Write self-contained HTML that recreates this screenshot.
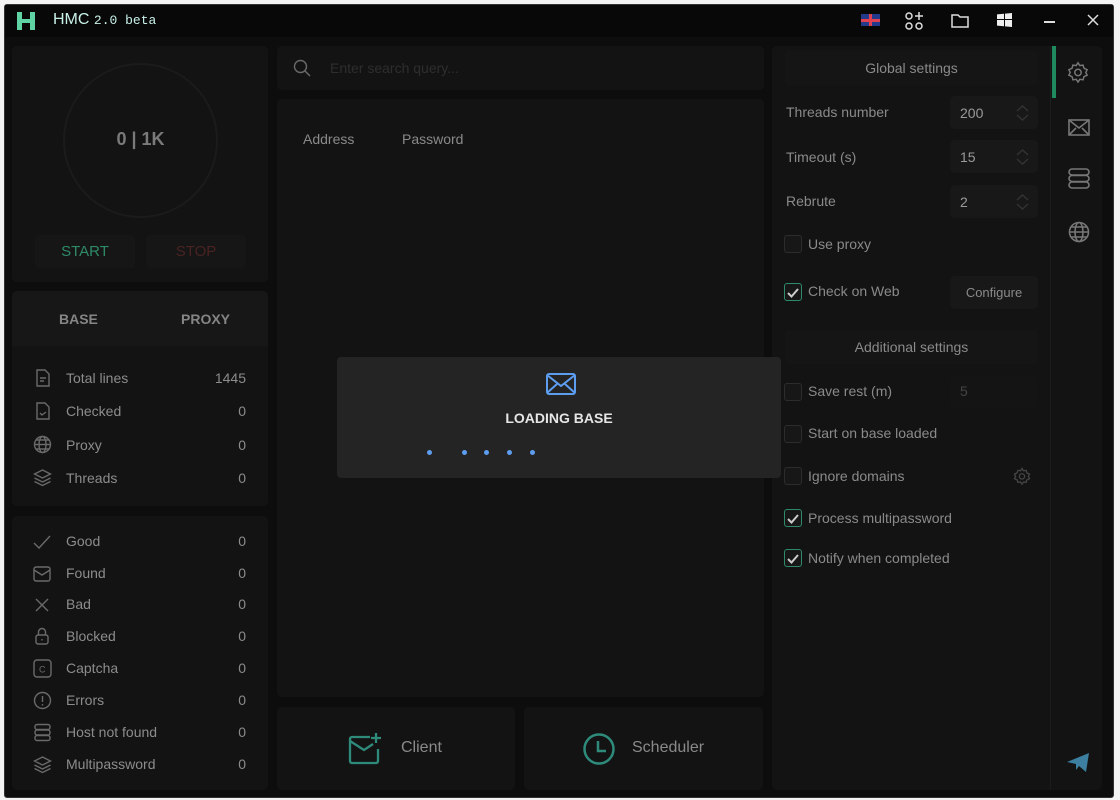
<!DOCTYPE html>
<html><head><meta charset="utf-8"><style>
*{margin:0;padding:0;box-sizing:border-box}
body{width:1120px;height:800px;background:#f3f3f3;position:relative;overflow:hidden;font-family:"Liberation Sans",sans-serif;color:#8a8a8a;font-size:14px}
.a{position:absolute}
.p{position:absolute;background:#131313;border-radius:5px}
svg{position:absolute;fill:none;stroke:#6a6a6a;stroke-width:1.4}
.row{position:absolute;left:66px;font-size:14px;color:#8c8c8c}
.cb{position:absolute;width:18px;height:18px;border:1px solid #2c2c2c;border-radius:3px;background:#171717}
.cb.on{border-color:#2d8a6a}
.inp{position:absolute;background:#181818;border-radius:5px;color:#9a9a9a;font-size:14px;padding-left:10px;line-height:34px}
</style></head><body>
<div class="a" style="left:4px;top:4px;width:1110px;height:794px;background:#0d0d0d;border:1px solid #333;border-radius:3px"></div>
<div class="a" style="left:5px;top:5px;width:1108px;height:32px;background:#080808"></div>
<svg style="left:17px;top:12px" width="18" height="18" viewBox="0 0 18 18"><path fill="#5fd3a3" stroke="none" d="M0 0h5v7h8V0h5v18h-5v-7H5v7H0z"/></svg>
<div class="a" style="left:53px;top:11px;color:#c8f0e8;font-size:16px">HMC <span style="font-family:'Liberation Mono',monospace;font-size:13px">2.0 beta</span></div>
<!-- title icons -->
<div class="a" style="left:861px;top:14px;width:19px;height:12px;background:#243a8a"></div>
<div class="a" style="left:861px;top:19px;width:19px;height:3px;background:#e04050"></div>
<div class="a" style="left:869px;top:14px;width:3px;height:12px;background:#e04050"></div>
<svg style="left:905px;top:12px" width="20" height="18" viewBox="0 0 20 18"><g stroke="#ddd" stroke-width="1.5"><circle cx="4" cy="4" r="3"/><circle cx="4" cy="14" r="3"/><circle cx="14" cy="14" r="3"/><path d="M14 0v8M10 4h8"/></g></svg>
<svg style="left:951px;top:13px" width="18" height="15" viewBox="0 0 18 15"><path stroke="#ddd" stroke-width="1.5" d="M1 2h6l2 2h8v10H1z"/></svg>
<div class="a" style="left:997px;top:13px;width:15px;height:14px;background:#eee;clip-path:polygon(0 10%,100% 0,100% 100%,0 90%)"></div>
<div class="a" style="left:1004px;top:12px;width:1px;height:16px;background:#080808"></div>
<div class="a" style="left:996px;top:19px;width:18px;height:1px;background:#080808"></div>
<div class="a" style="left:1044px;top:21px;width:11px;height:1.5px;background:#ddd"></div>
<svg style="left:1087px;top:14px" width="12" height="12" viewBox="0 0 12 12"><path stroke="#ddd" stroke-width="1.5" d="M1 1l10 10M11 1L1 11"/></svg>

<!-- left top -->
<div class="p" style="left:12px;top:46px;width:256px;height:236px"></div>
<div class="a" style="left:63px;top:63px;width:155px;height:155px;border:2px solid #1b1b1b;border-radius:50%"></div>
<div class="a" style="left:63px;top:129px;width:155px;text-align:center;font-weight:bold;font-size:18px;color:#7a7a7a">0 | 1K</div>
<div class="a" style="left:35px;top:235px;width:100px;height:33px;background:#161616;border-radius:4px;text-align:center;line-height:33px;color:#2e8a66;font-size:15px">START</div>
<div class="a" style="left:146px;top:235px;width:100px;height:33px;background:#161616;border-radius:4px;text-align:center;line-height:33px;color:#4a2222;font-size:15px">STOP</div>

<!-- base panel -->
<div class="p" style="left:12px;top:291px;width:256px;height:215px"></div>
<div class="a" style="left:12px;top:291px;width:256px;height:55px;background:#171717;border-radius:5px 5px 0 0"></div>
<div class="a" style="left:59px;top:311px;font-weight:bold;color:#858585">BASE</div>
<div class="a" style="left:181px;top:311px;font-weight:bold;color:#858585">PROXY</div>
<div class="row" style="top:370px;width:180px">Total lines<span class="a" style="left:130px;width:50px;text-align:right">1445</span></div>
<div class="row" style="top:403px;width:180px">Checked<span class="a" style="left:130px;width:50px;text-align:right">0</span></div>
<div class="row" style="top:437px;width:180px">Proxy<span class="a" style="left:130px;width:50px;text-align:right">0</span></div>
<div class="row" style="top:470px;width:180px">Threads<span class="a" style="left:130px;width:50px;text-align:right">0</span></div>
<svg style="left:35px;top:369px" width="16" height="18" viewBox="0 0 16 18"><path d="M2 1h8l4 4v12H2z M5 9h6M5 12h4"/></svg>
<svg style="left:35px;top:402px" width="16" height="18" viewBox="0 0 16 18"><path d="M2 1h8l4 4v12H2z M5 11l2 2 4-3"/></svg>
<svg style="left:33px;top:435px" width="19" height="19" viewBox="0 0 19 19"><circle cx="9.5" cy="9.5" r="8"/><ellipse cx="9.5" cy="9.5" rx="3.5" ry="8"/><path d="M1.5 9.5h16M3 5h13M3 14h13"/></svg>
<svg style="left:33px;top:468px" width="19" height="19" viewBox="0 0 19 19"><path d="M9.5 2l8 4-8 4-8-4z M1.5 10l8 4 8-4 M1.5 13.5l8 4 8-4"/></svg>

<!-- stats panel -->
<div class="p" style="left:12px;top:516px;width:256px;height:274px"></div>
<div class="row" style="top:533px;width:180px">Good<span class="a" style="left:130px;width:50px;text-align:right">0</span></div>
<div class="row" style="top:565px;width:180px">Found<span class="a" style="left:130px;width:50px;text-align:right">0</span></div>
<div class="row" style="top:596px;width:180px">Bad<span class="a" style="left:130px;width:50px;text-align:right">0</span></div>
<div class="row" style="top:628px;width:180px">Blocked<span class="a" style="left:130px;width:50px;text-align:right">0</span></div>
<div class="row" style="top:660px;width:180px">Captcha<span class="a" style="left:130px;width:50px;text-align:right">0</span></div>
<div class="row" style="top:692px;width:180px">Errors<span class="a" style="left:130px;width:50px;text-align:right">0</span></div>
<div class="row" style="top:724px;width:180px">Host not found<span class="a" style="left:130px;width:50px;text-align:right">0</span></div>
<div class="row" style="top:756px;width:180px">Multipassword<span class="a" style="left:130px;width:50px;text-align:right">0</span></div>
<svg style="left:33px;top:535px" width="18" height="14" viewBox="0 0 18 14"><path d="M1 8l5 5L17 1"/></svg>
<svg style="left:33px;top:566px" width="18" height="16" viewBox="0 0 18 16"><rect x="1" y="1" width="16" height="14" rx="2"/><path d="M1 4l8 5 8-5"/></svg>
<svg style="left:35px;top:598px" width="14" height="14" viewBox="0 0 14 14"><path d="M1 1l12 12M13 1L1 13"/></svg>
<svg style="left:35px;top:627px" width="14" height="18" viewBox="0 0 14 18"><rect x="1" y="8" width="12" height="9" rx="2"/><path d="M3.5 8V5a3.5 3.5 0 017 0v3M7 12v1.5"/></svg>
<svg style="left:33px;top:659px" width="19" height="19" viewBox="0 0 19 19"><rect x="1" y="1" width="17" height="17" rx="3"/><text x="6" y="13.5" font-size="9" fill="#6a6a6a" stroke="none" font-family="Liberation Sans">C</text></svg>
<svg style="left:33px;top:691px" width="19" height="19" viewBox="0 0 19 19"><circle cx="9.5" cy="9.5" r="8"/><path d="M9.5 5v6M9.5 13v1.5"/></svg>
<svg style="left:33px;top:723px" width="19" height="19" viewBox="0 0 19 19"><rect x="2" y="1.5" width="15" height="5" rx="2"/><rect x="2" y="7" width="15" height="5" rx="2"/><rect x="2" y="12.5" width="15" height="5" rx="2"/></svg>
<svg style="left:33px;top:755px" width="19" height="19" viewBox="0 0 19 19"><path d="M9.5 2l8 4-8 4-8-4z M1.5 10l8 4 8-4 M1.5 13.5l8 4 8-4"/></svg>

<!-- middle -->
<div class="p" style="left:277px;top:46px;width:487px;height:44px"></div>
<svg style="left:293px;top:59px" width="18" height="18" viewBox="0 0 18 18"><circle cx="7.5" cy="7.5" r="6"/><path d="M12 12l5 5"/></svg>
<div class="a" style="left:330px;top:60px;color:#2e2e2e;font-size:14px">Enter search query...</div>
<div class="p" style="left:277px;top:99px;width:487px;height:598px"></div>
<div class="a" style="left:303px;top:131px;color:#8a8a8a">Address</div>
<div class="a" style="left:402px;top:131px;color:#8a8a8a">Password</div>

<div class="p" style="left:277px;top:707px;width:238px;height:83px"></div>
<div class="p" style="left:524px;top:707px;width:239px;height:83px"></div>
<svg style="left:348px;top:732px" width="36" height="34" viewBox="0 0 36 34"><g stroke="#2e8a7a" stroke-width="2.3"><path d="M22 5H4a2 2 0 00-2 2v22a2 2 0 002 2h24a2 2 0 002-2V17"/><path d="M2 9l14 9 9-6"/><path d="M28 1v10M23 6h10"/></g></svg>
<div class="a" style="left:401px;top:739px;color:#8a8a8a;font-size:16px">Client</div>
<svg style="left:582px;top:732px" width="34" height="34" viewBox="0 0 34 34"><g stroke="#2e8a7a" stroke-width="2.5"><circle cx="17" cy="17" r="14.5"/><path d="M16 9v10h8"/></g></svg>
<div class="a" style="left:632px;top:739px;color:#8a8a8a;font-size:16px">Scheduler</div>

<!-- right -->
<div class="p" style="left:772px;top:46px;width:330px;height:744px"></div>
<div class="a" style="left:1050px;top:46px;width:1px;height:744px;background:#1c1c1c"></div>
<div class="a" style="left:1052px;top:46px;width:4px;height:52px;background:#1e8a5e"></div>
<div class="a" style="left:785px;top:51px;width:253px;height:34px;background:#151515;border-radius:4px;text-align:center;line-height:34px;color:#8a8a8a">Global settings</div>
<div class="a" style="left:786px;top:104px">Threads number</div>
<div class="a" style="left:786px;top:149px">Timeout (s)</div>
<div class="a" style="left:786px;top:193px">Rebrute</div>
<div class="inp" style="left:950px;top:96px;width:88px;height:33px">200</div>
<div class="inp" style="left:950px;top:140px;width:88px;height:33px">15</div>
<div class="inp" style="left:950px;top:185px;width:88px;height:33px">2</div>
<svg style="left:1016px;top:105px" width="13" height="16" viewBox="0 0 13 16"><path stroke="#333" d="M1 6l5.5-5 5.5 5M1 10l5.5 5 5.5-5"/></svg>
<svg style="left:1016px;top:149px" width="13" height="16" viewBox="0 0 13 16"><path stroke="#333" d="M1 6l5.5-5 5.5 5M1 10l5.5 5 5.5-5"/></svg>
<svg style="left:1016px;top:194px" width="13" height="16" viewBox="0 0 13 16"><path stroke="#333" d="M1 6l5.5-5 5.5 5M1 10l5.5 5 5.5-5"/></svg>
<div class="cb" style="left:784px;top:235px"></div><div class="a" style="left:808px;top:236px">Use proxy</div>
<div class="cb on" style="left:784px;top:283px"></div>
<svg style="left:787px;top:288px" width="12" height="10" viewBox="0 0 12 10"><path stroke="#ccc" stroke-width="2" d="M1 5l3.5 3.5L11 1"/></svg>
<div class="a" style="left:808px;top:283px">Check on Web</div>
<div class="a" style="left:950px;top:276px;width:88px;height:33px;background:#181818;border-radius:5px;text-align:center;line-height:33px;color:#8a8a8a;font-size:13px">Configure</div>
<div class="a" style="left:785px;top:330px;width:253px;height:34px;background:#151515;border-radius:4px;text-align:center;line-height:34px;color:#8a8a8a">Additional settings</div>
<div class="cb" style="left:784px;top:383px"></div><div class="a" style="left:808px;top:383px">Save rest (m)</div>
<div class="a" style="left:950px;top:375px;width:88px;height:33px;background:#141414;border-radius:5px;padding-left:10px;line-height:33px;color:#444">5</div>
<div class="cb" style="left:784px;top:425px"></div><div class="a" style="left:808px;top:425px">Start on base loaded</div>
<div class="cb" style="left:784px;top:467px"></div><div class="a" style="left:808px;top:468px">Ignore domains</div>
<svg style="left:1013px;top:467px" width="18" height="18" viewBox="0 0 24 24"><path stroke="#444" stroke-width="1.8" d="M12 2l2 3 3.5-.5 1 3.4L22 9.5 20.5 12.5 22 15.5l-3.5 1.6-1 3.4L14 20l-2 3-2-3-3.5.5-1-3.4L2 15.5 3.5 12.5 2 9.5l3.5-1.6 1-3.4L10 5z"/><circle cx="12" cy="12.5" r="3.5" stroke="#444" stroke-width="1.8"/></svg>
<div class="cb on" style="left:784px;top:509px"></div>
<svg style="left:787px;top:514px" width="12" height="10" viewBox="0 0 12 10"><path stroke="#ccc" stroke-width="2" d="M1 5l3.5 3.5L11 1"/></svg>
<div class="a" style="left:808px;top:510px">Process multipassword</div>
<div class="cb on" style="left:784px;top:549px"></div>
<svg style="left:787px;top:554px" width="12" height="10" viewBox="0 0 12 10"><path stroke="#ccc" stroke-width="2" d="M1 5l3.5 3.5L11 1"/></svg>
<div class="a" style="left:808px;top:550px">Notify when completed</div>

<!-- sidebar icons -->
<svg style="left:1067px;top:61px" width="22" height="22" viewBox="0 0 24 24"><path stroke="#777" stroke-width="1.6" d="M12 2l2 3 3.5-.5 1 3.4L22 9.5 20.5 12.5 22 15.5l-3.5 1.6-1 3.4L14 20l-2 3-2-3-3.5.5-1-3.4L2 15.5 3.5 12.5 2 9.5l3.5-1.6 1-3.4L10 5z"/><circle cx="12" cy="12.5" r="3.5" stroke="#777" stroke-width="1.6"/></svg>
<svg style="left:1068px;top:119px" width="22" height="17" viewBox="0 0 22 17"><rect x="1" y="1" width="20" height="15" stroke="#777" stroke-width="1.6"/><path stroke="#777" stroke-width="1.6" d="M1 1l10 8 10-8M1 16l7-7M21 16l-7-7"/></svg>
<svg style="left:1068px;top:168px" width="22" height="21" viewBox="0 0 22 21"><g stroke="#777" stroke-width="1.6"><rect x="1" y="1" width="20" height="6" rx="3"/><rect x="1" y="7.5" width="20" height="6" rx="3"/><rect x="1" y="14" width="20" height="6" rx="3"/></g></svg>
<svg style="left:1068px;top:221px" width="22" height="22" viewBox="0 0 22 22"><g stroke="#777" stroke-width="1.6"><circle cx="11" cy="11" r="9.5"/><ellipse cx="11" cy="11" rx="4" ry="9.5"/><path d="M1.5 11h19M3 6h16M3 16h16"/></g></svg>
<svg style="left:1067px;top:753px" width="22" height="20" viewBox="0 0 22 20"><path fill="#3d7fa0" stroke="none" d="M0 9L22 0 19 19 12 13 9 17 9 11z"/></svg>

<!-- loading modal (on top) -->
<div class="a" style="left:337px;top:357px;width:444px;height:121px;background:#242424;border-radius:4px"></div>
<svg style="left:546px;top:373px" width="30" height="22" viewBox="0 0 30 22"><rect x="1" y="1" width="28" height="20" rx="2" stroke="#5d9df0" stroke-width="2"/><path d="M1 2l14 11L29 2M1 20l10-9M29 20l-10-9" stroke="#5d9df0" stroke-width="2"/></svg>
<div class="a" style="left:337px;top:410px;width:444px;text-align:center;font-weight:bold;color:#e6e6e6;font-size:14px">LOADING BASE</div>
<div class="a" style="left:427px;top:450px;width:5px;height:5px;border-radius:50%;background:#5d9df0"></div>
<div class="a" style="left:462px;top:450px;width:5px;height:5px;border-radius:50%;background:#5d9df0"></div>
<div class="a" style="left:484px;top:450px;width:5px;height:5px;border-radius:50%;background:#5d9df0"></div>
<div class="a" style="left:507px;top:450px;width:5px;height:5px;border-radius:50%;background:#5d9df0"></div>
<div class="a" style="left:530px;top:450px;width:5px;height:5px;border-radius:50%;background:#5d9df0"></div>
</body></html>
